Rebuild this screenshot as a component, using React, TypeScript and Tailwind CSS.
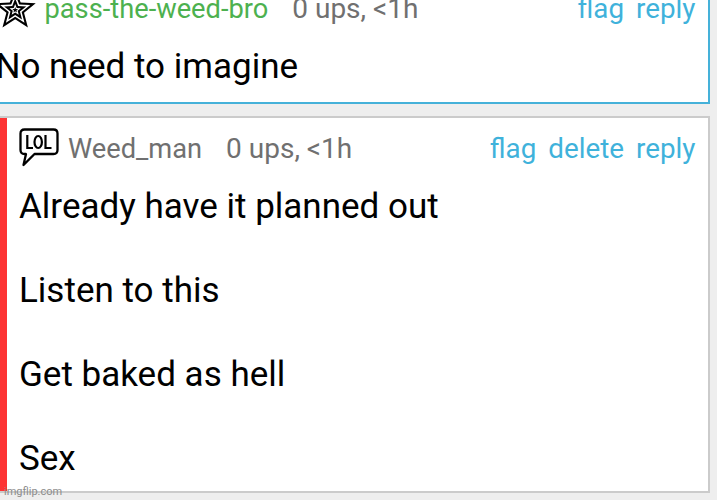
import React from "react";

function starPoints(radius: number) {
  return Array.from({ length: 10 }, (_, i) => {
    const r = i % 2 === 0 ? radius : radius * 0.43;
    const a = (i * Math.PI) / 5;
    return `${(19.2 + r * Math.sin(a)).toFixed(2)},${(22 - r * Math.cos(a)).toFixed(2)}`;
  }).join(" ");
}

function StarIcon() {
  return (
    <svg viewBox="0 0 42 42" className="h-[42px] w-[42px] overflow-visible">
      <polygon points={starPoints(21.6)} fill="#000" />
      <polygon points={starPoints(15.8)} fill="#fff" />
      <polygon points={starPoints(11.6)} fill="#000" />
      <polygon points={starPoints(6)} fill="#fff" />
      <polygon points={starPoints(3)} fill="#000" />
    </svg>
  );
}

function LolIcon() {
  return (
    <svg viewBox="0 0 42 42" className="h-[42px] w-[42px]">
      <path
        d="M5.5 1.5 H34.5 Q38.5 1.5 38.5 5.5 V22 Q38.5 26 34.5 26 H15.5 L4.5 37 L7 26 H5.5 Q1.5 26 1.5 22 V5.5 Q1.5 1.5 5.5 1.5 Z"
        fill="#fff"
        stroke="#000"
        strokeWidth="2.3"
        strokeLinejoin="round"
      />
      <g fill="none" stroke="#000" strokeWidth="2.2">
        <path d="M8.3 7 V20 H14" />
        <ellipse cx="19.2" cy="14" rx="3.7" ry="6" />
        <path d="M26.5 7 V20 H32.5" />
      </g>
    </svg>
  );
}

function Header({ icon, name, color, links }: { icon: React.ReactNode; name: string; color: string; links: string[] }) {
  return (
    <div className="flex h-[42px] text-[28px] leading-[42px] whitespace-pre">
      <div className="w-[49px] shrink-0">{icon}</div>
      <span className={`text-[27.25px] ${color}`}>{name}</span>
      <span className="ml-6 text-[#707070]">0 ups, &lt;1h</span>
      <div className="ml-auto flex gap-3 text-[27.8px] text-[#3fb2db]">
        {links.map((l) => (
          <a key={l}>{l}</a>
        ))}
      </div>
    </div>
  );
}

export default function App() {
  return (
    <div className="relative h-[500px] w-[717px] overflow-hidden bg-[#eeeeee] font-[Roboto,sans-serif] text-black">
      <div className="-mt-[26px] -ml-[25.5px] h-[130px] w-[735.5px] border-2 border-[#45b1d9] bg-white pt-[12px] pr-[12.5px] pl-[19px]">
        <Header icon={<StarIcon />} name="pass-the-weed-bro" color="text-[#4db14f]" links={["flag", "reply"]} />
        <p className="mt-[16px] text-[35px] leading-[42px]">No need to imagine</p>
      </div>
      <div className="mt-3 h-[377px] w-[710px] border-2 border-l-0 border-[#cbcbcb] bg-white">
        <div className="h-full border-l-[7px] border-[#fd3434] pt-[10px] pr-[12.5px] pl-3">
          <Header icon={<LolIcon />} name="Weed_man" color="text-[#707070]" links={["flag", "delete", "reply"]} />
          <p className="mt-[16px] text-[35px] leading-[42px] whitespace-pre-line">
            {"Already have it planned out\n\nListen to this\n\nGet baked as hell\n\nSex"}
          </p>
        </div>
      </div>
      <div className="absolute top-[485px] left-[4px] text-[11px] leading-[14px] text-[#8c8c8c]">imgflip.com</div>
    </div>
  );
}
